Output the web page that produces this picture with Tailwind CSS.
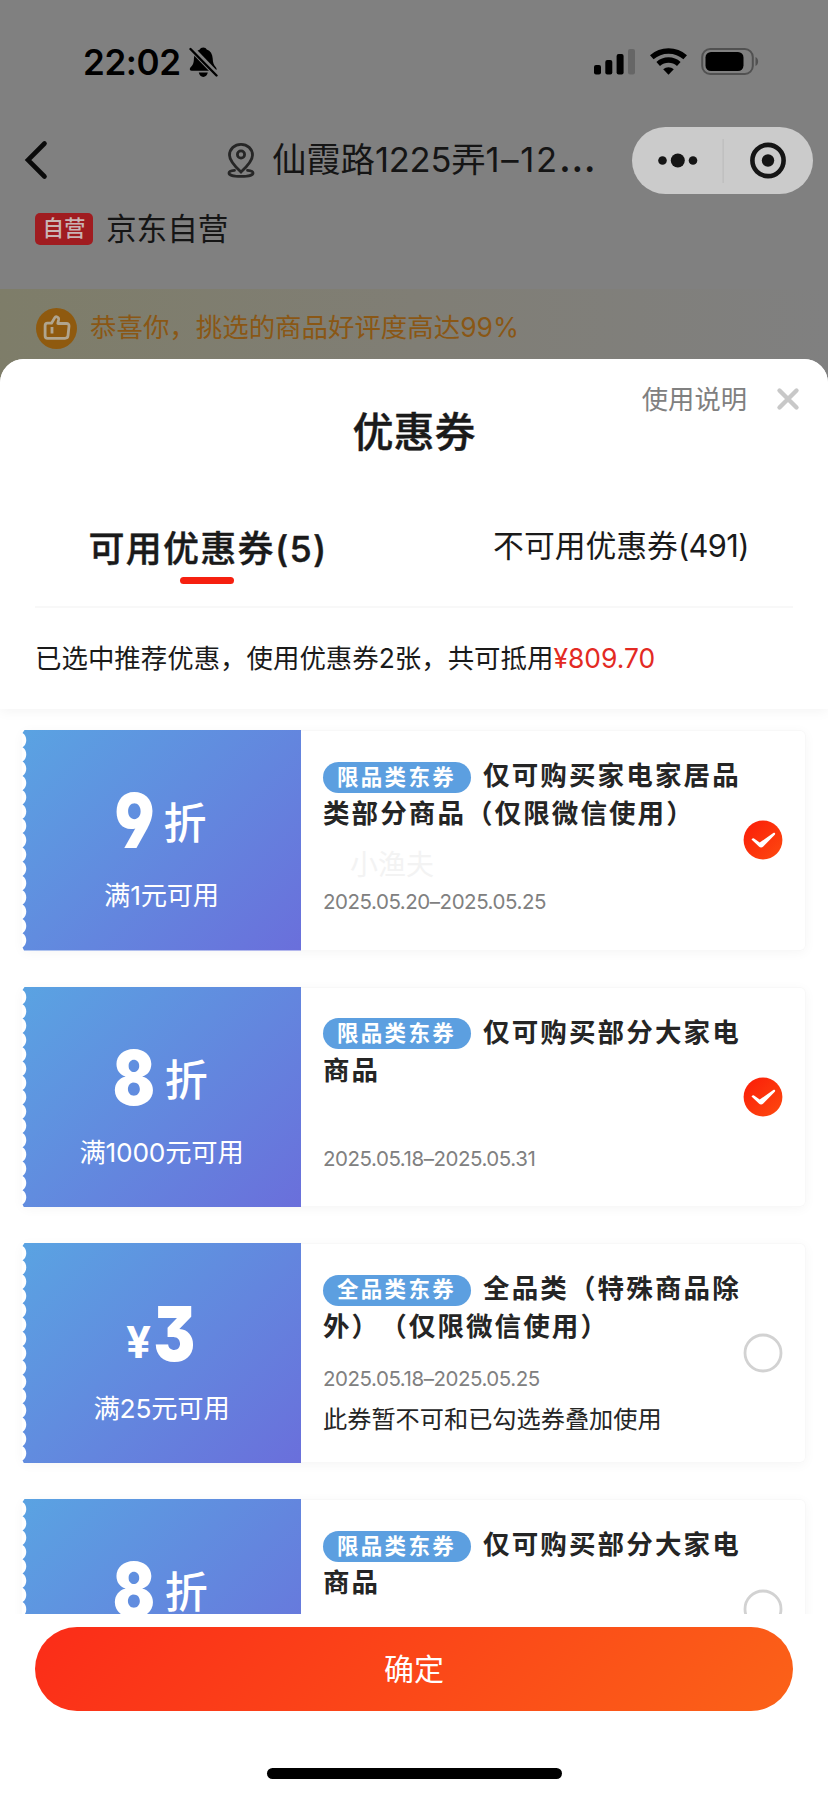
<!DOCTYPE html>
<html lang="zh-CN">
<head>
<meta charset="utf-8">
<title>优惠券</title>
<script src="https://cdn.jsdelivr.net/npm/@tailwindcss/browser@4"></script>
</head>
<body class="w-[828px] h-[1796px] overflow-hidden bg-[#808080] font-['Inter','Noto_Sans_CJK_SC',sans-serif] font-[385] text-[#1a1a1a] [text-spacing-trim:space-all]">
<div class="flex h-[1796px] flex-col">

  <!-- status bar -->
  <div class="flex h-[120px] shrink-0 items-start pl-[83px] pr-[68px] text-black">
    <span class="mt-[41px] w-[100px] whitespace-nowrap text-[35px] font-semibold leading-[42px] tracking-[-0.400px]">22:02</span>
    <svg class="mt-[46px] ml-[6px] h-[32px] w-[29px]" viewBox="0 0 29 32">
      <path d="M14.200 1.500c1.800 0 3 .8 3.500 2 3.800 1.300 5.800 4.500 6 9 .2 4 .8 6.300 3.300 9 1.200 1.600.5 3.300-1.300 3.300H2.800c-2 0-2.600-1.800-1.400-3.300 3-3 3.400-5 3.500-9 .2-4.500 2.200-7.700 5.900-9 .5-1.200 1.700-2 3.400-2zM9.800 26.600h9c-.5 2.600-2.300 4.400-4.500 4.400s-4-1.800-4.500-4.400z"/>
      <path d="M1.500 1.500 28 29" stroke="#808080" stroke-width="6"/>
      <path d="M1.500 3 27.500 29.500" stroke="#000" stroke-width="2.400" stroke-linecap="round"/>
    </svg>
    <div class="ml-auto flex items-start">
      <svg class="mt-[48px] h-[27px] w-[42px]" viewBox="0 0 42 27">
        <rect x="0" y="17" width="7" height="9.500" rx="2"/><rect x="11.300" y="12" width="7" height="14.500" rx="2"/><rect x="22.600" y="6" width="7" height="20.500" rx="2"/><rect x="34" y="1" width="7" height="25.500" rx="2" fill="#666"/>
      </svg>
      <svg class="mt-[48px] ml-[14px] h-[27px] w-[37px]" viewBox="0 0 37 27">
        <g fill="none" stroke="#000" stroke-width="5.400"><path d="M1.800 9.300c9.500-8.400 23.900-8.400 33.400 0"/><path d="M8.200 16c6-5.300 14.600-5.300 20.600 0"/></g>
        <path d="M18.500 26.800 13.200 21.300c3-2.700 7.600-2.700 10.600 0z"/>
      </svg>
      <svg class="mt-[48px] ml-[14px] h-[27px] w-[59px]" viewBox="0 0 59 27">
        <rect x="1.200" y="1" width="50.600" height="25" rx="8" fill="none" stroke="#515151" stroke-width="2"/><rect x="4.500" y="4" width="38" height="19" rx="5.500"/><path d="M54.500 9c3.500 1.200 3.500 7.800 0 9z" fill="#515151"/>
      </svg>
    </div>
  </div>

  <!-- navigation -->
  <div class="flex h-[80px] shrink-0 items-center pl-[24px] pr-[15px]">
    <svg class="h-[40px] w-[24px]" viewBox="0 0 24 40"><path d="M20.500 3.500 4 20l16.500 16.500" fill="none" stroke="#0a0a0a" stroke-width="4.600" stroke-linecap="round" stroke-linejoin="miter"/></svg>
    <svg class="ml-[179px] h-[36px] w-[28px]" viewBox="0 0 28 36" fill="none" stroke="#262626" stroke-width="2.800">
      <path d="M14 30C7 23.500 2.500 18.500 2.500 13.200 2.500 6.800 7.600 2.300 14 2.300s11.500 4.500 11.500 10.900C25.500 18.500 21 23.500 14 30z"/><circle cx="14" cy="12.500" r="3.600"/>
      <path d="M7.500 28.300c-3.200.3-5.500 1.100-5.500 2.600 0 2.200 5 3.500 12 3.500s12-1.300 12-3.500c0-1.500-2.300-2.300-5.500-2.600" stroke-linecap="round"/>
    </svg>
    <span class="ml-[17px] w-[350px] whitespace-nowrap text-[34.500px] leading-[50px] tracking-[-0.200px] text-[#151515]">仙霞路1225弄<span class="tracking-[1.700px]">1–12</span><span class="text-[43px] leading-none">…</span></span>
    <div class="ml-auto mt-[1px] flex h-[67px] w-[181px] shrink-0 items-center rounded-full bg-[#cbcbcb]">
      <svg class="h-[67px] w-[181px]" viewBox="0 0 181 67" fill="#151515">
        <circle cx="30.500" cy="33.500" r="4.300"/><circle cx="45.800" cy="33.500" r="7"/><circle cx="61" cy="33.500" r="4.300"/>
        <path d="M91.200 12v44" stroke="#bfbfbf" stroke-width="1.500"/>
        <circle cx="136" cy="33.500" r="15.600" fill="none" stroke="#151515" stroke-width="4.600"/><circle cx="136" cy="33.500" r="6.200"/>
      </svg>
    </div>
  </div>

  <!-- shop row -->
  <div class="flex h-[89px] shrink-0 items-start pl-[35px]">
    <span class="mt-[13px] flex h-[32px] w-[58px] items-center justify-center rounded-[5px] bg-[#a01c20] text-[21.500px] font-medium leading-none text-[#c9b4b5]">自营</span>
    <span class="ml-[13px] mt-[7px] text-[30.600px] leading-[44px] text-[#151515]">京东自营</span>
  </div>

  <!-- praise banner -->
  <div class="flex h-[94px] shrink-0 items-start bg-linear-to-r from-[#7e7d69] via-[#807e75] to-[#808080] pl-[36px]">
    <svg class="mt-[19px] h-[41px] w-[41px]" viewBox="0 0 41 41">
      <circle cx="20.500" cy="20.500" r="20.500" fill="#8f5a0f"/>
      <path d="M11.500 15.200H15.500l3.300-5.600c.9-1.500 4.200-.8 3.800 1.900l-.8 4h8.700c1.700 0 2.700 1 2.500 2.700l-1 9.500c-.2 1.800-1.300 2.600-3 2.600H11.600c-1.600 0-2.500-1-2.500-2.600V17.700c0-1.600.9-2.500 2.400-2.500z" fill="none" stroke="#b0a58f" stroke-width="2.800" stroke-linejoin="round"/><path d="M16 19v6.500" stroke="#b0a58f" stroke-width="2.800"/>
    </svg>
    <span class="ml-[13px] mt-[18px] text-[26.450px] leading-[40px] text-[#8a5715]">恭喜你，挑选的商品好评度高达99%</span>
  </div>

  <!-- coupon sheet -->
  <section class="relative -mt-[24px] flex min-h-0 flex-1 flex-col overflow-hidden rounded-t-[24px] bg-white">
    <header class="z-10 h-[350px] shrink-0 bg-white shadow-[0_2px_12px_rgba(0,0,0,0.05)]">
      <div class="flex h-[52px] items-start justify-end pr-[28px]">
        <span class="mt-[21px] text-[26.300px] leading-[40px] text-[#808080]">使用说明</span>
        <svg class="mt-[28px] ml-[29px] h-[24px] w-[24px]" viewBox="0 0 24 24"><path d="m3.500 3.500 17 17m0-17-17 17" stroke="#c8c8c8" stroke-width="4.400" stroke-linecap="round"/></svg>
      </div>
      <h1 class="-mt-[9px] text-center text-[41px] font-medium leading-[60px] [-webkit-text-stroke:0.4px]">优惠券</h1>
      <div class="mx-[35px] flex h-[146px] border-b-2 border-[#f8f8f8]">
        <div class="flex w-1/2 flex-col items-center pr-[35px]">
          <span class="mt-[61px] whitespace-nowrap pl-[2px] text-[36px] font-medium leading-[52px] tracking-[1.300px] [-webkit-text-stroke:0.4px]">可用优惠券(5)</span>
          <span class="mt-[2px] h-[7px] w-[54px] rounded-full bg-[#f62010]"></span>
        </div>
        <div class="flex w-1/2 justify-center pl-[35px]">
          <span class="mt-[58px] whitespace-nowrap text-[30.800px] leading-[52px]">不可用优惠券<span class="tracking-[-0.600px]">(491)</span></span>
        </div>
      </div>
      <p class="mt-[30px] pl-[35px] text-[26.450px] leading-[40px]">已选中推荐优惠，使用优惠券2张，共可抵用<span class="text-[#e32a23]">¥809.70</span></p>
    </header>

    <main class="flex min-h-0 flex-1 flex-col gap-[36px] overflow-hidden pl-[22px] pr-[22px] pt-[21.400px]" id="list"></main>

    <footer class="z-10 flex h-[182px] shrink-0 flex-col items-center bg-white pt-[13px]">
      <button class="h-[84px] w-[758px] rounded-full bg-linear-[135deg] from-[#fb2c18] to-[#fb6218] text-[30px] leading-[84px] text-white">确定</button>
      <span class="mt-[57px] h-[11px] w-[295px] rounded-full bg-black"></span>
    </footer>
  </section>
</div>

<script>
const coupons = [
  {n:'9', tag:'限品类东券', a:'仅可购买家电家居品', b:'类部分商品（仅限微信使用）', min:'满1元可用', date:'2025.05.20–2025.05.25', on:true, mark:'小渔夫'},
  {n:'8', tag:'限品类东券', a:'仅可购买部分大家电', b:'商品', min:'满1000元可用', date:'2025.05.18–2025.05.31', on:true},
  {n:'3', cash:true, tag:'全品类东券', a:'全品类（特殊商品除', b:'外）（仅限微信使用）', min:'满25元可用', date:'2025.05.18–2025.05.25', note:'此券暂不可和已勾选券叠加使用'},
  {n:'8', tag:'限品类东券', a:'仅可购买部分大家电', b:'商品', min:'', date:''}
];
let teeth = 'M6 0H279V220.400H2';
teeth += 'L0.500 217.500';
for (let y = 217.500; y > 10; y -= 14.300) teeth += `C5.500 ${y-3} 5.500 ${y-11.300} 0.500 ${y-14.300}`;
teeth += 'L2.500 0Z';
const digit = n => `<span class="inline-block origin-center scale-x-[0.82] text-[76px] font-black leading-[76px] [font-feature-settings:'cv04','cv09']">${n}</span>`;
document.getElementById('list').innerHTML = coupons.map((c, i) => `
<article class="flex h-[220.330px] shrink-0 rounded-[6px] shadow-[0_2px_12px_rgba(0,0,0,0.04)]">
  <div class="grid w-[279px] shrink-0">
    <svg class="col-start-1 row-start-1 h-[220.400px] w-[279px]" viewBox="0 0 279 220.400"><defs><linearGradient id="g${i}" gradientUnits="userSpaceOnUse" x1="15" y1="-15" x2="264" y2="235"><stop offset="0" stop-color="#5aa3e2"/><stop offset="1" stop-color="#6a6fdb"/></linearGradient></defs><rect width="8" height="220.400" fill="#fff"/><path d="${teeth}" fill="url(#g${i})"/></svg>
    <div class="z-10 col-start-1 row-start-1 flex flex-col items-center text-white">
      <div class="mt-[52px] flex h-[76px] items-start whitespace-nowrap">${c.cash
        ? `<span class="mt-[1px] text-[44px] font-bold leading-[93px]">¥</span><span class="-ml-[2px] -mr-[3px]">${digit(c.n)}</span>`
        : `<span class="-ml-[7px]">${digit(c.n)}</span><span class="ml-[5px] mt-[11px] text-[43px] font-medium leading-[60px]">折</span>`}</div>
      <p class="mt-[19px] text-[26.300px] leading-[38px] tracking-[-0.200px]">${c.min}</p>
    </div>
  </div>
  <div class="flex flex-1 rounded-r-[6px] border border-l-0 border-[#f8f8f8] bg-white pl-[22px]">
    <div class="flex w-[420px] flex-col whitespace-nowrap pt-[25px]">
      <div class="flex h-[38px] items-center text-[26.500px] font-bold leading-[38px] tracking-[2.150px] text-[#252525]"><span class="mt-[4px] mr-[12px] flex h-[31px] w-[148px] items-center justify-center rounded-full bg-[#5c9fe0] pr-[1px] text-[21.500px] leading-none tracking-[2.300px] text-white">${c.tag}</span>${c.a}</div>
      <div class="h-[38px] text-[26.500px] font-bold leading-[38px] tracking-[2.100px] text-[#252525]">${c.b}</div>
      ${c.note ? '' : `<div class="mt-[15px] h-[36px] pl-[27px] text-[28px] leading-[36px] text-[#f3f3f3]">${c.mark || ''}</div>`}
      <div class="${c.note ? 'mt-[20px]' : 'mt-[5px]'} h-[28px] text-[20.500px] leading-[28px] tracking-[-0.460px] text-[#808080]">${c.date}</div>
      ${c.note ? `<div class="mt-[9px] text-[24.200px] leading-[36px] text-[#252525]">${c.note}</div>` : ''}
    </div>
    <svg class="mt-[89px] h-[40px] w-[40px]" viewBox="0 0 40 40">${c.on
      ? `<defs><linearGradient id="c${i}" x1="0" y1="0" x2="1" y2="1"><stop offset="0" stop-color="#fb1c08"/><stop offset="1" stop-color="#fd4a10"/></linearGradient></defs><circle cx="20" cy="20" r="19.400" fill="url(#c${i})"/><path d="M8.500 19.500c1.200-1.500 2.200-1.300 3.200-.6l5 3.600L30.300 13c1.300-.8 2.500.4 1.500 1.700L20.500 26.300c-1.500 1.600-3.300 1.600-4.600.2z" fill="#fff"/>`
      : `<circle cx="20" cy="20" r="18" fill="none" stroke="#d2d2d2" stroke-width="2.800"/>`}</svg>
  </div>
</article>`).join('');
</script>
</body>
</html>
